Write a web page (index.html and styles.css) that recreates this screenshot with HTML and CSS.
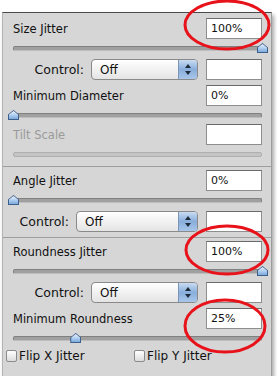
FILE: index.html
```html
<!DOCTYPE html>
<html lang="en">
<head>
  <meta charset="UTF-8">
  <meta name="viewport" content="width=device-width, initial-scale=1.0">
  <title>Shape Dynamics</title>
  <link rel="stylesheet" href="styles.css">
</head>
<body>

  <div class="panel">
    <div class="field">
      <span class="label">Size Jitter</span>
      <div class="box">100%</div>
    </div>
    <div class="slider"><div class="track"></div><div class="thumb" style="left: 100%"></div></div>
    <div class="control">
      <span class="label">Control:</span>
      <div class="select"><span>Off</span><div class="arrows"></div></div>
      <div class="box"></div>
    </div>

    <div class="field">
      <span class="label">Minimum Diameter</span>
      <div class="box">0%</div>
    </div>
    <div class="slider"><div class="track"></div><div class="thumb" style="left: 0%"></div></div>

    <div class="field disabled">
      <span class="label">Tilt Scale</span>
      <div class="box"></div>
    </div>
    <div class="slider disabled"><div class="track"></div></div>

    <div class="separator"></div>

    <div class="field">
      <span class="label">Angle Jitter</span>
      <div class="box">0%</div>
    </div>
    <div class="slider"><div class="track"></div><div class="thumb" style="left: 0%"></div></div>
    <div class="control">
      <span class="label">Control:</span>
      <div class="select wide"><span>Off</span><div class="arrows"></div></div>
      <div class="box"></div>
    </div>

    <div class="separator"></div>

    <div class="field">
      <span class="label">Roundness Jitter</span>
      <div class="box">100%</div>
    </div>
    <div class="slider"><div class="track"></div><div class="thumb" style="left: 100%"></div></div>
    <div class="control">
      <span class="label">Control:</span>
      <div class="select"><span>Off</span><div class="arrows"></div></div>
      <div class="box"></div>
    </div>

    <div class="field">
      <span class="label">Minimum Roundness</span>
      <div class="box">25%</div>
    </div>
    <div class="slider"><div class="track"></div><div class="thumb" style="left: 25%"></div></div>

    <div class="flips">
      <label class="check"><span class="checkbox"></span>Flip X Jitter</label>
      <label class="check"><span class="checkbox"></span>Flip Y Jitter</label>
    </div>
  </div>

  <!-- red marks drawn over the panel -->
  <svg class="marks" width="277" height="385" viewBox="0 0 277 385">
    <ellipse cx="227" cy="25" rx="42" ry="24" />
    <ellipse cx="227" cy="250" rx="41" ry="24" />
    <ellipse cx="225" cy="326" rx="40" ry="26" />
  </svg>

</body>
</html>
```

FILE: styles.css
```css
body {
  margin: 0;
  background-color: #ffffff;
  font-family: "DejaVu Sans", sans-serif;
  font-size: 11.5px;
  color: #111;
  position: relative;
}
.panel {
  width: 251px;
  margin: 12px 0 0 2px;
  padding: 5px 9px 11px 8px;
  background-color: #d6d6d6;
  border-top: 1px solid #4a4a4a;
  border-left: 1px solid #b4b4b4;
  border-right: 1px solid #9c9c9c;
  box-shadow: 2px 3px 4px rgba(0, 0, 0, 0.35);
}
.field, .control {
  height: 21px;
  display: flex;
  align-items: center;
}
.field {
  justify-content: space-between;
}
.field .label {
  padding-left: 2px;
}
.control {
  justify-content: flex-end;
  gap: 7px;
  margin: 2px 0 5px;
}
.control .label {
  font-size: 12.5px;
}
.disabled .label {
  color: #9a9a9a;
}
.box {
  box-sizing: border-box;
  width: 56px;
  height: 21px;
  padding: 3px 4px;
  background-color: #fff;
  border: 1px solid #8e8e8e;
  border-top-color: #6a6a6a;
  font-size: 11px;
  line-height: 14px;
}
.slider {
  position: relative;
  height: 18px;
  margin-left: 2px;
}
.track {
  position: absolute;
  left: 0;
  right: 0;
  top: 7px;
  height: 3px;
  border-radius: 2px;
  background-color: #a0a0a0;
  border: 1px solid #808080;
  border-bottom-color: #bdbdbd;
}
.slider.disabled .track {
  background-color: #c4c4c4;
  border-color: #b0b0b0;
}
.thumb {
  position: absolute;
  top: 4px;
  width: 11px;
  height: 10px;
  margin-left: -5px;
  background-color: #3d5f8c;
  clip-path: polygon(50% 0, 100% 45%, 100% 100%, 0 100%, 0 45%);
}
.thumb::before {
  content: "";
  position: absolute;
  left: 1px;
  top: 1px;
  right: 1px;
  bottom: 1px;
  background: linear-gradient(#eef4fc, #a6c8ee 60%, #7eaadc);
  clip-path: polygon(50% 0, 100% 45%, 100% 100%, 0 100%, 0 45%);
}
.select {
  box-sizing: border-box;
  width: 107px;
  height: 21px;
  display: flex;
  align-items: center;
  justify-content: space-between;
  border: 1px solid #8a8a8a;
  border-radius: 4px;
  background: linear-gradient(#ffffff, #e4e4e4);
  overflow: hidden;
  margin-right: 1px;
}
.select.wide {
  width: 122px;
}
.select span {
  padding-left: 8px;
  font-size: 12px;
}
.arrows {
  position: relative;
  width: 18px;
  height: 100%;
  border-left: 1px solid #7d95b4;
  background: linear-gradient(#c9dcf2, #88aedb 50%, #a9c6ea);
}
.arrows::before, .arrows::after {
  content: "";
  position: absolute;
  left: 6px;
  border-left: 3px solid transparent;
  border-right: 3px solid transparent;
}
.arrows::before {
  top: 4px;
  border-bottom: 4px solid #1d2a3a;
}
.arrows::after {
  bottom: 4px;
  border-top: 4px solid #1d2a3a;
}
.separator {
  height: 1px;
  margin: 3px -9px 3px -8px;
  background-color: #9e9e9e;
}
.flips {
  display: flex;
  height: 18px;
  align-items: center;
  margin-left: -5px;
  font-size: 12px;
}
.check {
  display: flex;
  align-items: center;
  gap: 2px;
  width: 131px;
}
.checkbox {
  box-sizing: border-box;
  width: 11px;
  height: 12px;
  border: 1px solid #8a8a8a;
  border-radius: 2px;
  background: linear-gradient(#ffffff, #dcdcdc);
}
.marks {
  position: absolute;
  left: 0;
  top: 0;
  pointer-events: none;
}
.marks ellipse {
  fill: none;
  stroke: #e8121a;
  stroke-width: 3;
}
```
